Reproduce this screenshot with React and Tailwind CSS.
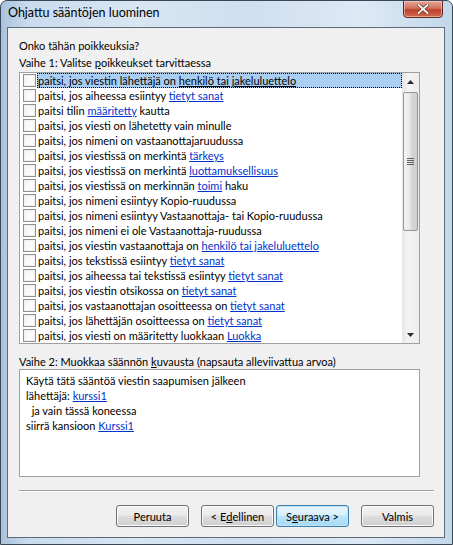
import React from "react";

const F = { fontFamily: '"Lato", "Segoe UI", sans-serif' };

function L({ children, sel }) {
  return (
    <span className={sel ? "underline text-black" : "underline text-[#0033cc]"}>{children}</span>
  );
}

const rows = [
  ["paitsi, jos viestin lähettäjä on ", "henkilö tai jakeluluettelo", ""],
  ["paitsi, jos aiheessa esiintyy ", "tietyt sanat", ""],
  ["paitsi tilin ", "määritetty", " kautta"],
  ["paitsi, jos viesti on lähetetty vain minulle", "", ""],
  ["paitsi, jos nimeni on vastaanottajaruudussa", "", ""],
  ["paitsi, jos viestissä on merkintä ", "tärkeys", ""],
  ["paitsi, jos viestissä on merkintä ", "luottamuksellisuus", ""],
  ["paitsi, jos viestissä on merkinnän ", "toimi", " haku"],
  ["paitsi, jos nimeni esiintyy Kopio-ruudussa", "", ""],
  ["paitsi, jos nimeni esiintyy Vastaanottaja- tai Kopio-ruudussa", "", ""],
  ["paitsi, jos nimeni ei ole Vastaanottaja-ruudussa", "", ""],
  ["paitsi, jos viestin vastaanottaja on ", "henkilö tai jakeluluettelo", ""],
  ["paitsi, jos tekstissä esiintyy ", "tietyt sanat", ""],
  ["paitsi, jos aiheessa tai tekstissä esiintyy ", "tietyt sanat", ""],
  ["paitsi, jos viestin otsikossa on ", "tietyt sanat", ""],
  ["paitsi, jos vastaanottajan osoitteessa on ", "tietyt sanat", ""],
  ["paitsi, jos lähettäjän osoitteessa on ", "tietyt sanat", ""],
  ["paitsi, jos viesti on määritetty luokkaan ", "Luokka", ""],
];

function Btn({ children, def }) {
  return (
    <div
      className={
        "w-[73px] h-[22px] rounded-[3px] border flex items-center justify-center text-black " +
        (def
          ? "border-[#3c7fb1] bg-[linear-gradient(#eaf6fd_0%,#d9f0fc_45%,#bee6fd_50%,#a7d9f5_100%)] shadow-[inset_0_0_0_1px_#c0e4f8]"
          : "border-[#707070] bg-[linear-gradient(#f2f2f2_0%,#ebebeb_45%,#dddddd_50%,#cfcfcf_100%)] shadow-[inset_0_0_0_1px_#fbfbfb]")
      }
    >
      {children}
    </div>
  );
}

export default function App() {
  return (
    <div
      style={F}
      className="w-[453px] h-[545px] text-[11px] leading-[15px] text-black relative overflow-hidden rounded-t-[7px] border border-[#3a4756] bg-[linear-gradient(90deg,#a9c3dd_0%,#c9dbed_6%,#d8e6f3_30%,#cfdff0_55%,#dde9f5_80%,#c3d7eb_100%)]"
    >
      {/* title bar */}
      <div className="h-[26px] flex items-start relative">
        <div className="pl-[7px] pt-[4px] text-[12.5px] text-black">Ohjattu sääntöjen luominen</div>
        <div className="absolute right-[9px] top-[-1px] w-[40px] h-[18px] rounded-b-[4px] border border-[#5e2a22] bg-[linear-gradient(#e5a597_0%,#d2715f_45%,#c0412b_55%,#cf6b4c_100%)] flex items-center justify-center shadow-[inset_0_0_0_1px_rgba(255,220,210,0.5)]">
          <svg width="12" height="10" viewBox="0 0 12 10">
            <path d="M1.5 1 L10.5 9 M10.5 1 L1.5 9" stroke="#5a2a22" strokeWidth="3.2" strokeLinecap="square" />
            <path d="M1.5 1 L10.5 9 M10.5 1 L1.5 9" stroke="#ffffff" strokeWidth="1.8" strokeLinecap="square" />
          </svg>
        </div>
      </div>

      {/* client */}
      <div className="ml-[6px] mr-[7px] h-[511px] border border-[#5d6a78] bg-[#f0f0f0] flex flex-col pl-[11px] pr-[10px] pt-[10px]">
        <div className="h-[15px]">Onko tähän poikkeuksia?</div>
        <div className="mt-[2px] h-[15px]">
          Vaihe 1: Valitse <span className="underline">p</span>oikkeukset tarvittaessa
        </div>
        {/* list */}
        <div className="mt-[2px] w-[401px] h-[272px] shrink-0 border border-[#a0a0a0] bg-white flex overflow-hidden">
          <div className="flex-1 flex flex-col">
            {rows.map((r, i) => (
              <div key={i} className="h-[15px] shrink-0 flex items-center pl-[3px]">
                <div className="w-[13px] h-[13px] border border-[#8e8f8f] bg-[linear-gradient(135deg,#f4f4f4,#ffffff)] shadow-[inset_0_0_0_1px_#f0f0f0] shrink-0" />
                <div
                  className={
                    "ml-[1px] pl-[1px] pr-[1px] h-[15px] whitespace-nowrap " +
                    (i === 0 ? "flex-1 bg-[#aacdf2] outline-1 outline-dotted outline-offset-[-1px] outline-black" : "")
                  }
                >
                  {r[0]}
                  {r[1] && <L sel={i === 0}>{r[1]}</L>}
                  {r[2]}
                </div>
              </div>
            ))}
          </div>
          {/* scrollbar */}
          <div className="w-[17px] shrink-0 bg-[linear-gradient(90deg,#e6e6e6,#f4f4f4_40%,#ececec)] flex flex-col items-center">
            <div className="h-[17px] w-[17px] flex items-center justify-center">
              <svg width="7" height="4" viewBox="0 0 7 4"><path d="M3.5 0 L7 4 L0 4 Z" fill="#2a2a2a" /></svg>
            </div>
            <div className="mt-[2px] w-[15px] h-[139px] rounded-[2px] border border-[#959595] bg-[linear-gradient(90deg,#f3f3f3,#e9e9e9_45%,#d8d8d8_55%,#cfcfcf)] flex items-center justify-center">
              <div className="flex flex-col gap-[1px]">
                <div className="w-[7px] h-[1px] bg-[#5f5f5f]" />
                <div className="w-[7px] h-[1px] bg-[#5f5f5f]" />
                <div className="w-[7px] h-[1px] bg-[#5f5f5f]" />
                <div className="w-[7px] h-[1px] bg-[#5f5f5f]" />
              </div>
            </div>
            <div className="flex-1" />
            <div className="h-[17px] w-[17px] flex items-center justify-center">
              <svg width="7" height="4" viewBox="0 0 7 4"><path d="M0 0 L7 0 L3.5 4 Z" fill="#2a2a2a" /></svg>
            </div>
          </div>
        </div>

        <div className="mt-[10px] h-[15px]">
          Vaihe 2: Muokkaa säännön <span className="underline">k</span>uvausta (napsauta alleviivattua arvoa)
        </div>
        <div className="w-[401px] h-[108px] shrink-0 border border-[#a0a0a0] bg-white pl-[6px] pt-[3px]">
          <div className="h-[15px]">Käytä tätä sääntöä viestin saapumisen jälkeen</div>
          <div className="h-[15px]">
            lähettäjä: <L>kurssi1</L>
          </div>
          <div className="h-[15px]">&nbsp; ja vain tässä koneessa</div>
          <div className="h-[15px]">
            siirrä kansioon <L>Kurssi1</L>
          </div>
        </div>

        <div className="mt-[13px] w-[415px] h-[2px] shrink-0 border-t border-[#a0a0a0] border-b border-b-white" />

        <div className="mt-[13px] flex pl-[97px]">
          <Btn>Peruuta</Btn>
          <div className="ml-[12px]">
            <Btn>
              &lt; E<span className="underline">d</span>ellinen
            </Btn>
          </div>
          <div className="ml-[2px]">
            <Btn def>
              S<span className="underline">e</span>uraava &gt;
            </Btn>
          </div>
          <div className="ml-[12px]">
            <Btn>Valmis</Btn>
          </div>
        </div>
      </div>
    </div>
  );
}
